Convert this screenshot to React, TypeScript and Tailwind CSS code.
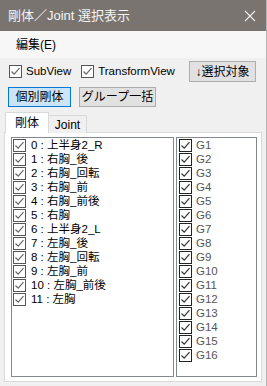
import React from 'react';

const font = { fontFamily: '"Liberation Sans", "Noto Sans CJK JP", sans-serif' };

const bodies = [
  '0 : 上半身2_R',
  '1 : 右胸_後',
  '2 : 右胸_回転',
  '3 : 右胸_前',
  '4 : 右胸_前後',
  '5 : 右胸',
  '6 : 上半身2_L',
  '7 : 左胸_後',
  '8 : 左胸_回転',
  '9 : 左胸_前',
  '10 : 左胸_前後',
  '11 : 左胸',
];

const groups = Array.from({ length: 16 }, (_, i) => `G${i + 1}`);

// Small win32-style checkbox with a tick
function Check({ dark = false }: { dark?: boolean }) {
  return (
    <span
      className={
        'flex h-[13px] w-[13px] shrink-0 items-center justify-center border bg-white ' +
        (dark ? 'border-[#222]' : 'border-[#555]')
      }
    >
      <svg width="11" height="11" viewBox="0 0 11 11">
        <path
          d="M1.5 5.5 L4.2 8.2 L9.5 2.2"
          fill="none"
          stroke={dark ? '#333' : '#666'}
          strokeWidth="1.2"
        />
      </svg>
    </span>
  );
}

export default function App() {
  return (
    <div
      className="flex h-[386px] w-[267px] flex-col overflow-hidden border-r border-[#b4b4b4] bg-[#f0f0f0] text-[12px] text-black"
      style={font}
    >
      {/* Title bar */}
      <div className="flex h-[31px] shrink-0 items-center bg-[#7a7471] pl-[8px] pr-[10px] text-[13px] text-[#f4f4f4]">
        <span>剛体／Joint 選択表示</span>
        <div className="flex-1" />
        <svg width="12" height="12" viewBox="0 0 12 12">
          <path d="M1 1 L11 11 M11 1 L1 11" stroke="#f0f0f0" strokeWidth="1.1" />
        </svg>
      </div>

      {/* Menu */}
      <div className="flex h-[27px] shrink-0 items-center bg-[#f7f7f7] pl-[16px] text-[12px]">
        編集(E)
      </div>

      {/* Options row */}
      <div className="mt-[3px] flex h-[21px] items-center pl-[9px] text-[11.5px]">
        <Check />
        <span className="ml-[4px]">SubView</span>
        <span className="ml-[10px]">
          <Check />
        </span>
        <span className="ml-[4px]">TransformView</span>
        <div className="flex-1" />
        <button
          type="button"
          className="mr-[10px] flex h-[21px] w-[67px] items-center justify-center border border-[#adadad] bg-[#e1e1e1] text-[12px]"
        >
          ↓選択対象
        </button>
      </div>

      {/* Mode buttons */}
      <div className="mt-[5px] flex items-center gap-[8px] pl-[8px]">
        <button
          type="button"
          className="flex h-[20px] w-[63px] items-center justify-center border border-[#0078d7] bg-[#cce4f7] text-[12px]"
        >
          個別剛体
        </button>
        <button
          type="button"
          className="flex h-[20px] w-[77px] items-center justify-center border border-[#adadad] bg-[#e1e1e1] text-[12px]"
        >
          グループ一括
        </button>
      </div>

      {/* Tabs */}
      <div className="relative z-10 mt-[5px] flex h-[21px] items-end pl-[5px]">
        <div className="flex h-[21px] w-[44px] items-center justify-center border border-b-0 border-[#d9d9d9] bg-white pb-[1px] text-[12px]">
          剛体
        </div>
        <div className="flex h-[18px] w-[38px] items-center justify-center border border-b-0 border-l-0 border-[#d9d9d9] bg-[#f0f0f0] text-[12px]">
          Joint
        </div>
      </div>

      {/* Tab panel */}
      <div className="-mt-[1px] ml-[4px] flex h-[250px] w-[258px] gap-[2px] border border-[#d9d9d9] bg-white pl-[6px] pt-[4px]">
        <div className="h-[240px] w-[163px] border border-[#828790] bg-white pl-[1px]">
          {bodies.map((b) => (
            <div key={b} className="flex h-[14px] items-center">
              <Check />
              <span className="ml-[5px] text-[11.5px] leading-[12px]">{b}</span>
            </div>
          ))}
        </div>
        <div className="h-[240px] w-[81px] border border-[#828790] bg-white pl-[2px]">
          {groups.map((g) => (
            <div key={g} className="flex h-[14px] items-center">
              <Check dark />
              <span className="ml-[4px] text-[11.5px] leading-[12px] text-[#555]">{g}</span>
            </div>
          ))}
        </div>
      </div>
    </div>
  );
}
